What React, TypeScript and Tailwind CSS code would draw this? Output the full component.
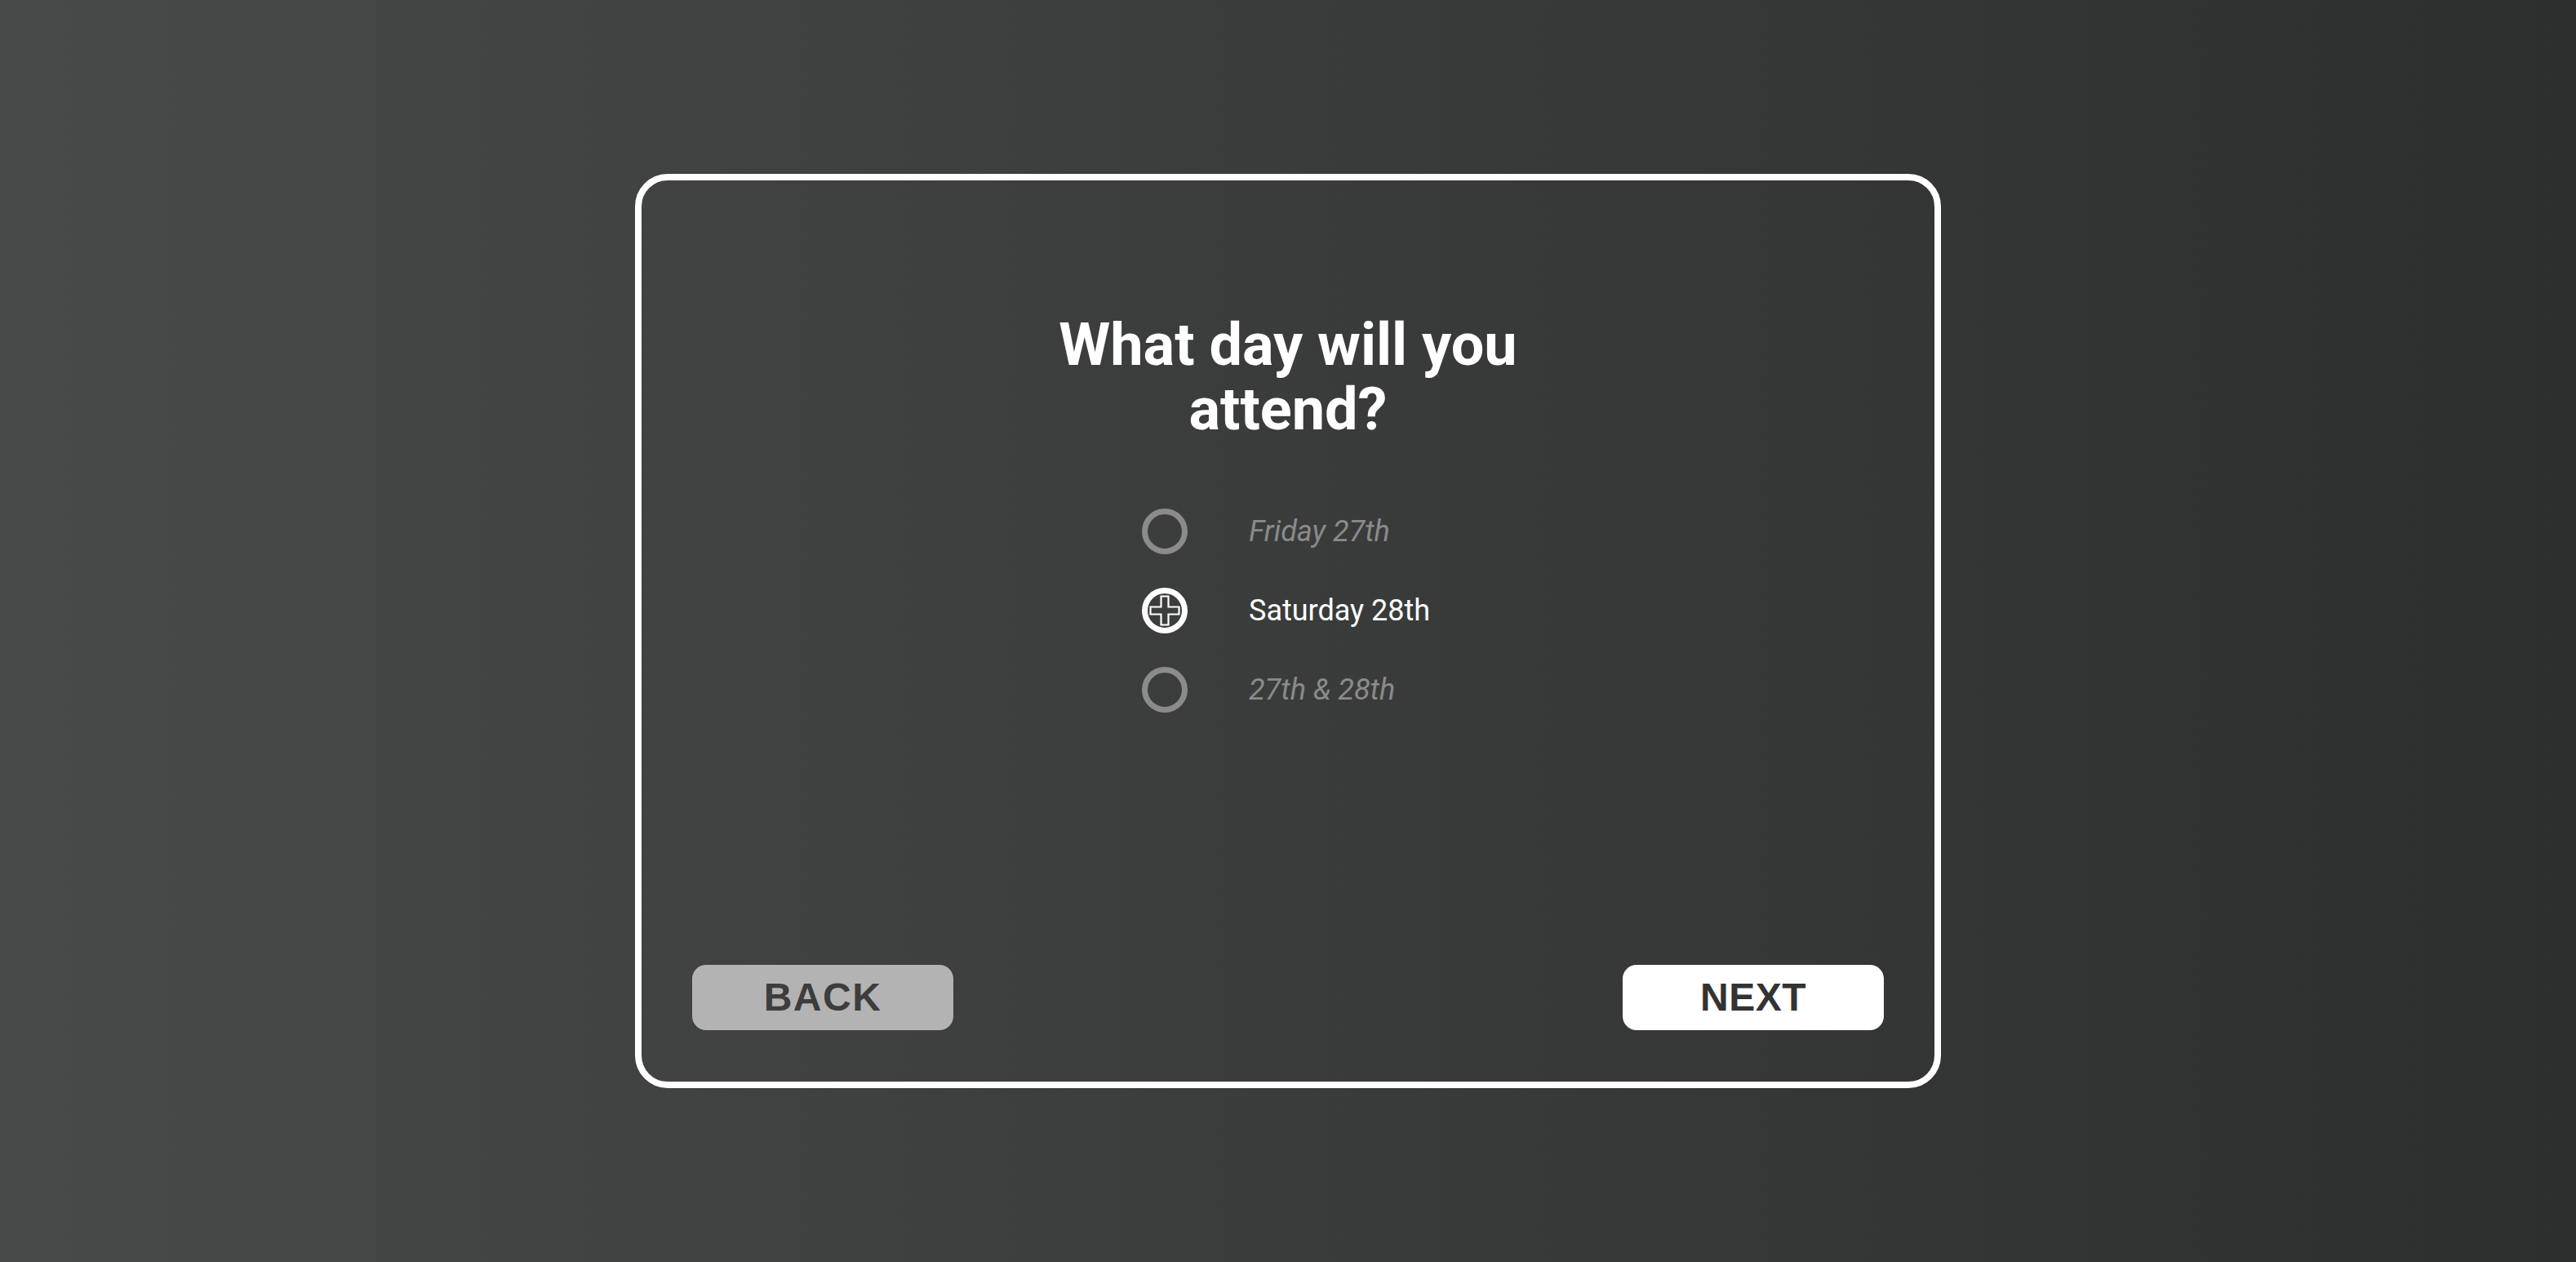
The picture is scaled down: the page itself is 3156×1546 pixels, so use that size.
import React, { useState } from 'react';

const OPTIONS = ['Friday 27th', 'Saturday 28th', '27th & 28th'];

const RadioIcon: React.FC<{ selected: boolean }> = ({ selected }) => (
  <svg width="56" height="56" viewBox="0 0 56 56" className="shrink-0">
    <circle
      cx="28"
      cy="28"
      r="24.5"
      fill="none"
      stroke={selected ? '#ffffff' : '#8b8b8b'}
      strokeWidth="7"
    />
    {selected && (
      <path
        d="M23.5 10.5 H32.5 V23.5 H45.5 V32.5 H32.5 V45.5 H23.5 V32.5 H10.5 V23.5 H23.5 Z"
        fill="none"
        stroke="#ffffff"
        strokeWidth="2.2"
      />
    )}
  </svg>
);

export default function App() {
  const [day, setDay] = useState('Saturday 28th');

  return (
    <div className="h-screen w-full flex items-center justify-center bg-linear-to-r from-[#484a49] to-[#2d2f2e] font-['Roboto',sans-serif]">
      <div className="w-[1600px] h-[1120px] border-8 border-white rounded-[40px] flex flex-col items-center pt-[162px] px-[62px] pb-[63px]">
        <h1 className="text-[72px] leading-[79px] font-bold text-white text-center">
          What day will you
          <br />
          attend?
        </h1>

        <div className="w-[358px] mt-[82px] flex flex-col gap-[41px]">
          {OPTIONS.map((opt) => {
            const selected = day === opt;
            return (
              <button
                key={opt}
                type="button"
                onClick={() => setDay(opt)}
                className="flex items-center gap-[75px] text-left"
              >
                <RadioIcon selected={selected} />
                <span
                  className={`text-[36px] ${
                    selected ? 'text-white not-italic' : 'text-[#8a8a8a] italic'
                  }`}
                >
                  {opt}
                </span>
              </button>
            );
          })}
        </div>

        <div className="flex-1" />

        <div className="w-full flex justify-between">
          <button
            type="button"
            className="w-[320px] h-[80px] rounded-[17px] bg-[#b3b3b3] text-[#3d3d3d] font-['Liberation_Sans',Arial,sans-serif] font-bold text-[48px] tracking-[1.5px] flex items-center justify-center"
          >
            BACK
          </button>
          <button
            type="button"
            className="w-[320px] h-[80px] rounded-[17px] bg-white text-[#333333] font-['Liberation_Sans',Arial,sans-serif] font-bold text-[48px] tracking-[0.5px] flex items-center justify-center"
          >
            NEXT
          </button>
        </div>
      </div>
    </div>
  );
}
